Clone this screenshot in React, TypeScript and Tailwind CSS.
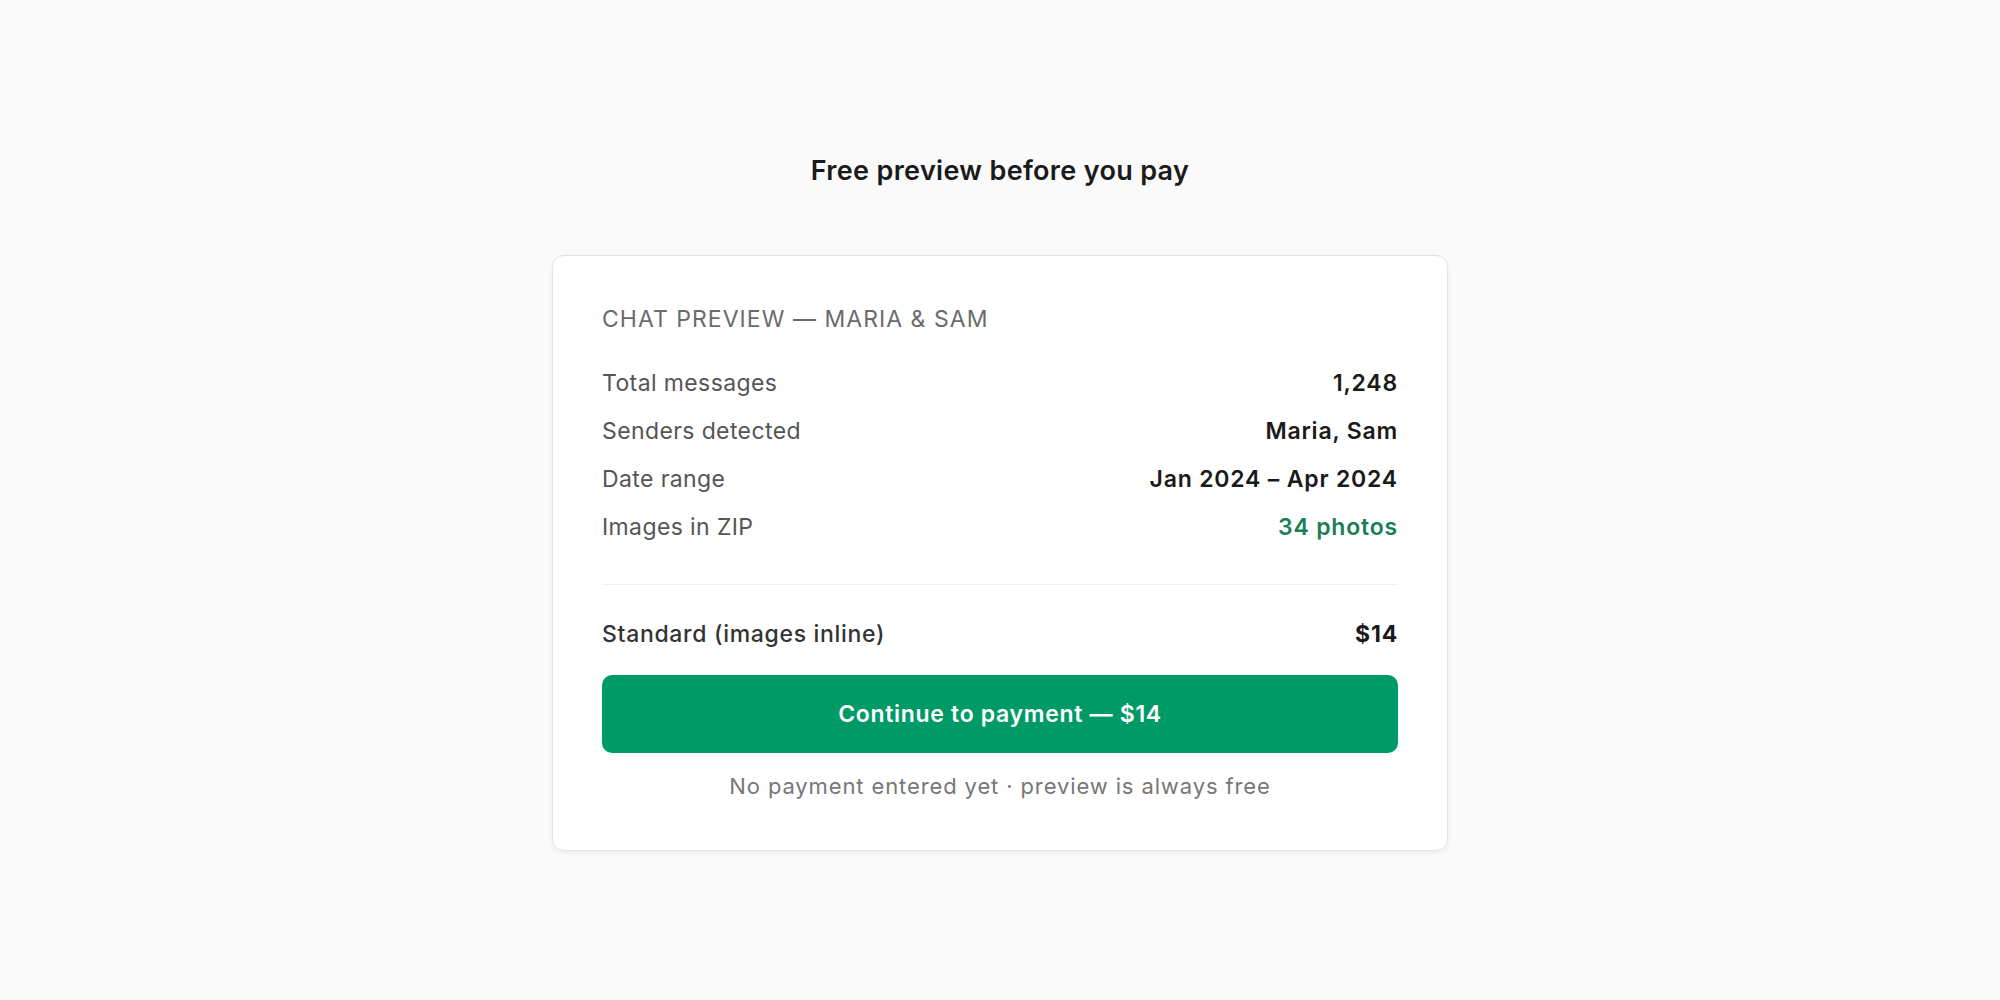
import React from "react";

const rows: { label: string; value: string; green?: boolean }[] = [
  { label: "Total messages", value: "1,248" },
  { label: "Senders detected", value: "Maria, Sam" },
  { label: "Date range", value: "Jan 2024 – Apr 2024" },
  { label: "Images in ZIP", value: "34 photos", green: true },
];

export default function App() {
  return (
    <div
      className="min-h-screen w-full bg-[#fafafa] flex flex-col items-center pt-[151px]"
      style={{ fontFamily: "Inter, 'Noto Sans', sans-serif" }}
    >
      <h1 className="text-[27px] leading-[40px] tracking-[0.012em] font-semibold text-[#1a1a1a]">
        Free preview before you pay
      </h1>
      <div className="mt-[64px] w-[896px] bg-white rounded-[12px] border border-[#e3e3e3] shadow-[0_2px_6px_rgba(0,0,0,0.06)] px-[49px] pt-[47px] pb-[48px]">
        <div className="text-[23px] leading-[33px] tracking-[0.045em] text-[#6b6b6b] uppercase">
          Chat preview — Maria &amp; Sam
        </div>
        <div className="mt-[31px] flex flex-col gap-[15px]">
          {rows.map((r) => (
            <div key={r.label} className="flex justify-between text-[23px] leading-[33px]">
              <span className="text-[#555] tracking-[0.017em]">{r.label}</span>
              <span
                className={
                  r.green
                    ? "font-semibold tracking-[0.035em] text-[#1a7f55]"
                    : "font-semibold tracking-[0.035em] text-[#1a1a1a]"
                }
              >
                {r.value}
              </span>
            </div>
          ))}
        </div>
        <div className="mt-[40px] border-t border-[#efefef]" />
        <div className="mt-[33px] flex justify-between text-[23px] leading-[33px]">
          <span className="font-medium tracking-[0.03em] text-[#333]">Standard (images inline)</span>
          <span className="font-bold tracking-[0.035em] text-[#1a1a1a]">$14</span>
        </div>
        <button className="mt-[24px] w-full h-[78px] rounded-[10px] bg-[#009a66] text-white text-[23px] tracking-[0.03em] font-semibold">
          Continue to payment — $14
        </button>
        <div className="mt-[18px] text-center text-[22px] leading-[31px] tracking-[0.04em] text-[#777]">
          No payment entered yet · preview is always free
        </div>
      </div>
    </div>
  );
}
